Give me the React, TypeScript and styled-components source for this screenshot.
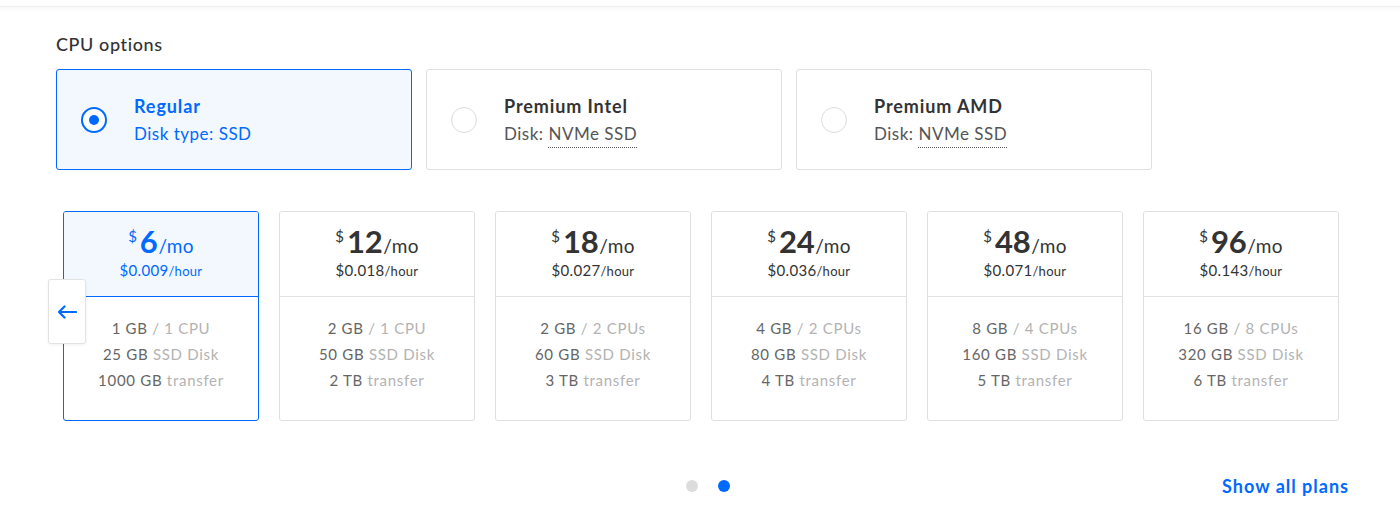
import React from "react";
import styled, { createGlobalStyle } from "styled-components";

const GlobalStyle = createGlobalStyle`
  body {
    margin: 0;
    background: #ffffff;
    font-family: Lato, "Open Sans", "Liberation Sans", sans-serif;
    color: #333333;
  }
`;

const cpuOptions = [
  { title: "Regular", label: "Disk type:", value: "SSD", selected: true, dotted: false },
  { title: "Premium Intel", label: "Disk:", value: "NVMe SSD", selected: false, dotted: true },
  { title: "Premium AMD", label: "Disk:", value: "NVMe SSD", selected: false, dotted: true },
];

const plans = [
  { price: "6", hour: "0.009", ram: "1 GB", cpu: "1 CPU", disk: "25 GB", transfer: "1000 GB" },
  { price: "12", hour: "0.018", ram: "2 GB", cpu: "1 CPU", disk: "50 GB", transfer: "2 TB" },
  { price: "18", hour: "0.027", ram: "2 GB", cpu: "2 CPUs", disk: "60 GB", transfer: "3 TB" },
  { price: "24", hour: "0.036", ram: "4 GB", cpu: "2 CPUs", disk: "80 GB", transfer: "4 TB" },
  { price: "48", hour: "0.071", ram: "8 GB", cpu: "4 CPUs", disk: "160 GB", transfer: "5 TB" },
  { price: "96", hour: "0.143", ram: "16 GB", cpu: "8 CPUs", disk: "320 GB", transfer: "6 TB" },
];

export default function App() {
  return (
    <>
      <GlobalStyle />
      <TopBar />
      <Page>
        <Heading>CPU options</Heading>
        <CpuRow>
          {cpuOptions.map((opt) => (
            <CpuCard key={opt.title} $selected={opt.selected}>
              <Radio $selected={opt.selected} />
              <div>
                <CpuTitle $selected={opt.selected}>{opt.title}</CpuTitle>
                <CpuSub $selected={opt.selected}>
                  {opt.label} {opt.dotted ? <Dotted>{opt.value}</Dotted> : opt.value}
                </CpuSub>
              </div>
            </CpuCard>
          ))}
        </CpuRow>

        <Carousel>
          <ArrowButton aria-label="Previous plans">
            <svg width="20" height="14" viewBox="0 0 20 14" fill="none">
              <path
                d="M19 7H2M7.5 1.5L2 7l5.5 5.5"
                stroke="#0069ff"
                strokeWidth="2.2"
                strokeLinecap="round"
                strokeLinejoin="round"
              />
            </svg>
          </ArrowButton>
          <PlanRow>
            {plans.map((p, i) => (
              <PlanCard key={p.price} $selected={i === 0}>
                <PlanHead $selected={i === 0}>
                  <PriceLine>
                    <Dollar>$</Dollar>
                    <Amount>{p.price}</Amount>
                    <Per>/mo</Per>
                  </PriceLine>
                  <HourLine>
                    ${p.hour}
                    <small>/hour</small>
                  </HourLine>
                </PlanHead>
                <PlanBody>
                  <Spec>
                    {p.ram} <Muted>/ {p.cpu}</Muted>
                  </Spec>
                  <Spec>
                    {p.disk} <Muted>SSD Disk</Muted>
                  </Spec>
                  <Spec>
                    {p.transfer} <Muted>transfer</Muted>
                  </Spec>
                </PlanBody>
              </PlanCard>
            ))}
          </PlanRow>
        </Carousel>

        <Footer>
          <span />
          <Dots>
            <Dot />
            <Dot $active />
          </Dots>
          <ShowAll href="#">Show all plans</ShowAll>
        </Footer>
      </Page>
    </>
  );
}

const TopBar = styled.div`
  height: 6px;
  background: #ffffff;
  border-bottom: 1px solid #efefef;
  box-shadow: 0 2px 5px rgba(0, 0, 0, 0.035);
`;

const Page = styled.main`
  padding: 25px 51px 0 56px;
  height: 524px;
  box-sizing: border-box;
`;

const Heading = styled.h2`
  margin: 0;
  font-size: 18px;
  line-height: 24px;
  font-weight: 500;
  letter-spacing: 0.6px;
  color: #333333;
`;

const CpuRow = styled.div`
  display: grid;
  grid-template-columns: repeat(3, 356px);
  gap: 14px;
  margin-top: 13px;
`;

const CpuCard = styled.div<{ $selected: boolean }>`
  height: 101px;
  box-sizing: border-box;
  display: flex;
  align-items: center;
  gap: 27px;
  padding: 0 0 0 24px;
  border: 1px solid ${(p) => (p.$selected ? "#0069ff" : "#dfdfdf")};
  border-radius: 3px;
  background: ${(p) => (p.$selected ? "#f3f8ff" : "#ffffff")};
`;

const Radio = styled.span<{ $selected: boolean }>`
  width: 26px;
  height: 26px;
  box-sizing: border-box;
  border-radius: 50%;
  border: ${(p) => (p.$selected ? "2px solid #0069ff" : "1px solid #dcdcdc")};
  background: #ffffff;
  display: flex;
  align-items: center;
  justify-content: center;
  flex-shrink: 0;

  &::after {
    content: "";
    display: ${(p) => (p.$selected ? "block" : "none")};
    width: 10px;
    height: 10px;
    border-radius: 50%;
    background: #0069ff;
  }
`;

const CpuTitle = styled.div<{ $selected: boolean }>`
  font-size: 18px;
  line-height: 24px;
  font-weight: 700;
  letter-spacing: 0.9px;
  color: ${(p) => (p.$selected ? "#0069ff" : "#333333")};
`;

const CpuSub = styled.div<{ $selected: boolean }>`
  margin-top: 4px;
  font-size: 17px;
  line-height: 24px;
  letter-spacing: 0.5px;
  color: ${(p) => (p.$selected ? "#0069ff" : "#555555")};
`;

const Dotted = styled.span`
  border-bottom: 1px dotted #555555;
  padding-bottom: 3px;
`;

const Carousel = styled.div`
  position: relative;
  margin: 41px 11px 0 7px;
`;

const ArrowButton = styled.button`
  position: absolute;
  left: -15px;
  top: 68px;
  width: 38px;
  height: 65px;
  border: 1px solid #e3e3e3;
  border-radius: 3px;
  background: #ffffff;
  box-shadow: 0 1px 3px rgba(0, 0, 0, 0.06);
  display: flex;
  align-items: center;
  justify-content: center;
  padding: 0;
  z-index: 2;
`;

const PlanRow = styled.div`
  display: grid;
  grid-template-columns: repeat(6, 196px);
  gap: 20px;
`;

const PlanCard = styled.div<{ $selected: boolean }>`
  height: 210px;
  box-sizing: border-box;
  border: 1px solid ${(p) => (p.$selected ? "#0069ff" : "#dfdfdf")};
  border-radius: 3px;
  background: #ffffff;
  overflow: hidden;
  display: flex;
  flex-direction: column;
`;

const PlanHead = styled.div<{ $selected: boolean }>`
  height: 85px;
  box-sizing: border-box;
  padding-top: 14px;
  text-align: center;
  border-bottom: 1px solid ${(p) => (p.$selected ? "#0069ff" : "#e3e3e3")};
  background: ${(p) => (p.$selected ? "#f3f8ff" : "#ffffff")};
  color: ${(p) => (p.$selected ? "#0069ff" : "#333333")};
`;

const PriceLine = styled.div`
  display: flex;
  justify-content: center;
  align-items: baseline;
  line-height: 30px;
`;

const Dollar = styled.span`
  font-size: 15px;
  align-self: flex-start;
  line-height: 20px;
  margin-right: 3px;
`;

const Amount = styled.span`
  font-size: 31px;
  font-weight: 700;
  letter-spacing: -0.3px;
`;

const Per = styled.span`
  font-size: 19px;
  margin-left: 1px;
  letter-spacing: 0.3px;
`;

const HourLine = styled.div`
  margin-top: -1px;
  font-size: 15px;
  line-height: 20px;
  letter-spacing: 0.3px;

  small {
    font-size: 13px;
  }
`;

const PlanBody = styled.div`
  flex: 1;
  padding-top: 18px;
  text-align: center;
`;

const Spec = styled.div`
  font-size: 15px;
  line-height: 26px;
  letter-spacing: 0.7px;
  color: #666666;
`;

const Muted = styled.span`
  color: #b3b3b3;
`;

const Footer = styled.div`
  display: grid;
  grid-template-columns: 1fr auto 1fr;
  align-items: center;
  margin-top: 54px;
`;

const Dots = styled.div`
  display: flex;
  gap: 20px;
  margin-left: 11px;
`;

const Dot = styled.span<{ $active?: boolean }>`
  width: 12px;
  height: 12px;
  border-radius: 50%;
  background: ${(p) => (p.$active ? "#0069ff" : "#dcdcdc")};
`;

const ShowAll = styled.a`
  justify-self: end;
  font-size: 18px;
  font-weight: 700;
  letter-spacing: 1px;
  color: #0069ff;
  text-decoration: none;
`;
